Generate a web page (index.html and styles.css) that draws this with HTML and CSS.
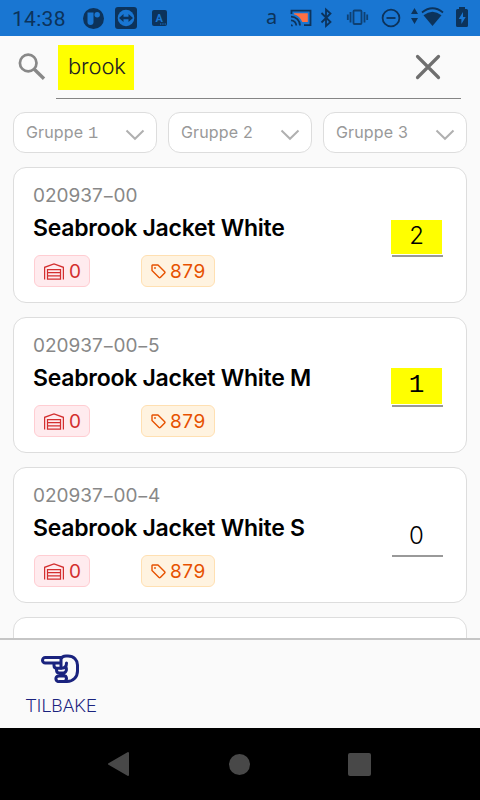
FILE: index.html
```html
<!DOCTYPE html>
<html lang="no">
<head>
<meta charset="utf-8">
<title>Varer</title>
<link rel="stylesheet" href="styles.css">
</head>
<body>
<svg width="0" height="0" class="defs">
  <symbol id="chevron" viewBox="0 0 20 12"><path d="M1.500 1.500 10 9.800 18.500 1.500" fill="none" stroke="#b0b0b0" stroke-width="2"/></symbol>
  <symbol id="warehouse" viewBox="0 0 20 17"><path d="M.6 16.500V4.300L10 .8l9.400 3.500v12.200M3.500 16V6.500h13V16ZM3.500 9.700h13M3.500 12.900h13" fill="none" stroke="currentColor" stroke-width="1.250"/></symbol>
  <symbol id="tag" viewBox="0 0 15 15"><path d="M1 1.500v5l7 7q.7.500 1.300 0l4.400-4.500q.600-.600 0-1.200L7 1H1.500Q1 1 1 1.500Z" fill="none" stroke="currentColor" stroke-width="1.400" stroke-linejoin="round"/><circle cx="4" cy="4" r=".9" fill="currentColor"/></symbol>
</svg>
<div class="screen">
  <header class="status">
    <span class="clock">14:38</span>
    <svg class="status-left" width="90" height="36" viewBox="80 0 90 36">
      <circle cx="93.500" cy="18.500" r="10.500" fill="#0c335b"/>
      <path d="M87.500 12.500h6v9.500a3 3 0 0 1-6 0Z" fill="#1976d2"/><circle cx="97.200" cy="14.800" r="2.700" fill="#1976d2"/>
      <rect x="115" y="7" width="22" height="22" rx="3" fill="#0c335b"/><circle cx="126" cy="18" r="8.300" fill="#1976d2"/>
      <path d="m119 18 4.500-4v2.800h5V14l4.500 4-4.500 4v-2.800h-5V22Z" fill="#0c335b"/>
      <rect x="152" y="10" width="15" height="16" rx="2" fill="#0c335b"/>
      <text x="159.300" y="21.500" class="badge-letter">A</text><path d="M160 24h6" stroke="#1976d2" stroke-dasharray="1.300 1"/>
    </svg>
    <span class="carrier">a</span>
    <svg class="status-right" width="190" height="36" viewBox="284 0 190 36">
      <g fill="none" stroke="#0c335b" stroke-width="1.800">
        <path d="M291.500 14v-3.300h19v14.500h-6.500"/><path d="M294 14.300v-1.100h13.800v8.800h-5.500q-2.500-6-8.300-7.700Z" fill="#ff7043" stroke="none"/>
        <path d="M291 16.600a9 9 0 0 1 9 9M291 20.300a5.300 5.300 0 0 1 5.300 5.300"/><path d="M291 24.300a2 2 0 0 1 2 2h-2Z" fill="#0c335b" stroke="none"/>
        <path d="m321.500 13 9 9-4.500 4V9.500l4.500 4-9 9"/>
        <g opacity=".8"><rect x="353.500" y="10.500" width="8" height="13.500" rx="1"/><path d="M350.500 12v10.500M347.800 14.500v5.500M364.500 12v10.500M367.200 14.500v5.500"/></g>
        <circle cx="391" cy="18" r="8.400"/><path d="M386.500 18h9"/>
      </g>
      <g fill="#0c335b"><path d="m414.500 8 3.500 6h-7Zm0 16-3.500-6h7Z"/><path d="M432.500 26 423.500 15.300q9-7 18 0Z"/><path d="M422 12.500q10.500-8.500 21 0" fill="none" stroke="#0c335b" stroke-width="1.800"/><path d="M459 7h6v2h1.500q1.500 0 1.500 1.500v15q0 1.500-1.500 1.500h-9q-1.500 0-1.500-1.500v-15Q456 9 457.500 9H459Z"/></g>
      <path d="m463 12-4.300 7h2.700v5l4.300-7H463Z" fill="#1976d2"/>
    </svg>
  </header>
  <main class="content">
    <div class="search">
      <svg class="lens" width="28" height="28" viewBox="0 0 28 28"><circle cx="10.200" cy="10" r="8.300" fill="none" stroke="#888" stroke-width="2.700"/><path d="m16 16 10 9.800" stroke="#888" stroke-width="3.400"/></svg>
      <div class="field"><span class="query">brook</span>
        <svg class="clear" width="26" height="26" viewBox="0 0 26 26"><path d="m2.500 2.500 21 21M23.500 2.500l-21 21" stroke="#6f6f6f" stroke-width="3.200" stroke-linecap="round"/></svg>
      </div>
    </div>
    <div class="filters">
      <div class="filter"><span>Gruppe <span class="one">1</span></span><svg width="20" height="12"><use href="#chevron"/></svg></div>
      <div class="filter"><span>Gruppe 2</span><svg width="20" height="12"><use href="#chevron"/></svg></div>
      <div class="filter"><span>Gruppe 3</span><svg width="20" height="12"><use href="#chevron"/></svg></div>
    </div>
    <div class="list">
      <article class="card"><div class="info"><div class="sku">020937<i>−</i>00</div><h2>Seabrook Jacket White</h2>
        <div class="tags"><span class="tag stock"><svg width="20" height="17"><use href="#warehouse"/></svg>0</span><span class="tag price"><svg width="15" height="15"><use href="#tag"/></svg>879</span></div></div>
        <div class="qty"><span class="marked">2</span></div></article>
      <article class="card"><div class="info"><div class="sku">020937<i>−</i>00<i>−</i>5</div><h2>Seabrook Jacket White M</h2>
        <div class="tags"><span class="tag stock"><svg width="20" height="17"><use href="#warehouse"/></svg>0</span><span class="tag price"><svg width="15" height="15"><use href="#tag"/></svg>879</span></div></div>
        <div class="qty"><span class="marked tall one">1</span></div></article>
      <article class="card"><div class="info"><div class="sku">020937<i>−</i>00<i>−</i>4</div><h2>Seabrook Jacket White S</h2>
        <div class="tags"><span class="tag stock"><svg width="20" height="17"><use href="#warehouse"/></svg>0</span><span class="tag price"><svg width="15" height="15"><use href="#tag"/></svg>879</span></div></div>
        <div class="qty"><span>0</span></div></article>
      <article class="card"></article>
    </div>
  </main>
  <footer class="toolbar">
    <div class="back"><svg width="40" height="30" viewBox="0 0 40 30" fill="none" stroke="#1a237e" stroke-width="3" stroke-linejoin="round" stroke-linecap="round">
      <path d="M20 3.500H4.300a2.800 2.800 0 0 0 0 5.600H19.500"/><path d="M20 14V5Q21 2 25 2h2c6 0 9.500 4.500 9.500 9v6c0 6-4.500 10.500-10.500 10.500h-7.500a2.800 2.800 0 0 1-1.500-5.500"/><path d="M13 9.500v2q0 2.800 3 2.800h4.500q5 0 5-5.300M15.500 14.500v1.500q0 3 3 3h4.500q3.500-1.500 2-6M18 22h6.500q2 2.500 0 5"/></svg>
      <span>TILBAKE</span></div>
  </footer>
  <nav class="navbar">
    <svg width="24" height="26" viewBox="0 0 24 26"><path d="M2 13 21 2v22Z" fill="#484848" stroke="#484848" stroke-width="2" stroke-linejoin="round"/></svg>
    <span class="home"></span><span class="recent"></span>
  </nav>
</div>
</body>
</html>
```
FILE: styles.css
```css
* { box-sizing: border-box; }
body { margin: 0; background: #fafafa; font-family: Inter, sans-serif; }
.defs { display: none; }
svg { flex: none; }
.screen { width: 480px; height: 800px; display: flex; flex-direction: column; overflow: hidden; }
.status { height: 36px; flex: none; background: #1976d2; color: #0c335b; display: flex; align-items: center; padding-left: 12px; font-family: Roboto, sans-serif; }
.clock { width: 68px; font-size: 21px; letter-spacing: .3px; font-weight: 450; padding-top: 2px; }
.badge-letter { font: 700 11px Roboto, sans-serif; fill: #1976d2; text-anchor: middle; }
.carrier { font: 20px "Noto Sans", sans-serif; width: 18px; margin-left: 96px; line-height: 32px; margin-top: -3px; }
.content { height: 602px; flex: none; overflow: hidden; }
.search { height: 63px; display: flex; padding-left: 18px; padding-right: 19px; }
.lens { margin-top: 17px; margin-right: 10px; }
.field { flex: 1; display: flex; justify-content: space-between; border-bottom: 1px solid #858585; padding: 9px 20px 0 2px; }
.query { height: 45px; width: 76px; background: #ff0; color: #222; padding-left: 10px; font-size: 22px; line-height: 43px; font-weight: 300; letter-spacing: -.15px; }
.clear { margin-top: 9px; }
.filters { display: grid; grid-template-columns: repeat(3, 1fr); gap: 11px; padding: 13px 13px 0 13px; }
.filter { height: 41px; border: 1px solid #ddd; border-radius: 12px; background: #fff; display: flex; justify-content: space-between; align-items: center; padding: 0 11px 0 12px; color: #999; font-size: 16px; line-height: 20px; letter-spacing: .15px; }
.filter > span { margin-top: -2px; }
.filter svg { margin-top: 4px; }
.one { font-family: "Liberation Mono", monospace; font-weight: 400; }
.filter .one { font-size: 17px; line-height: 1; }
.list { padding: 14px 13px 0; display: flex; flex-direction: column; gap: 14px; }
.card { height: 136px; border: 1px solid #ddd; border-radius: 13px; background: #fff; display: flex; justify-content: space-between; padding: 15px 23px 0 19px; }
.sku { font-size: 19px; line-height: 26px; color: #888; }
.sku i { font-style: normal; letter-spacing: -1.200px; margin-left: -.8px; }
h2 { margin: 5px 0 0; font-size: 23px; line-height: 28px; font-weight: 600; letter-spacing: -.26px; white-space: nowrap; color: #000; }
.tags { display: flex; gap: 51px; margin-top: 13px; margin-left: 1px; }
.tag { height: 32px; border: 1px solid; border-radius: 6px; display: flex; align-items: center; font-size: 19px; }
.stock { width: 56px; padding-left: 9px; gap: 5px; color: #d32f2f; background: #ffebee; border-color: #ffcdd2; }
.price { width: 74px; padding-left: 9px; gap: 4px; color: #e65100; background: #fff3e0; border-color: #ffe0b2; letter-spacing: .6px; }
.qty { width: 51px; height: 39px; margin-top: 35px; border-bottom: 2px solid #999; display: flex; align-items: flex-end; font-size: 24px; font-weight: 300; }
.qty span { flex: none; width: 51px; height: 34px; line-height: 31px; text-align: center; margin: 0 0 1px -1px; }
.marked { background: #ff0; }
.qty .tall { height: 36px; line-height: 35px; font-size: 26px; }
.toolbar { height: 90px; flex: none; border-top: 2px solid #c5c5c5; padding: 14px 25px; }
.back { width: 72px; display: flex; flex-direction: column; align-items: center; color: #1a237e; font: 350 18.500px/24px Roboto, sans-serif; }
.back span { margin-top: 10px; }
.navbar { height: 72px; flex: none; background: #000; display: flex; align-items: center; padding-left: 107px; }
.home { width: 21px; height: 21px; border-radius: 50%; background: #484848; margin-left: 98px; }
.recent { width: 23px; height: 23px; border-radius: 2px; background: #484848; margin-left: 98px; }
```
